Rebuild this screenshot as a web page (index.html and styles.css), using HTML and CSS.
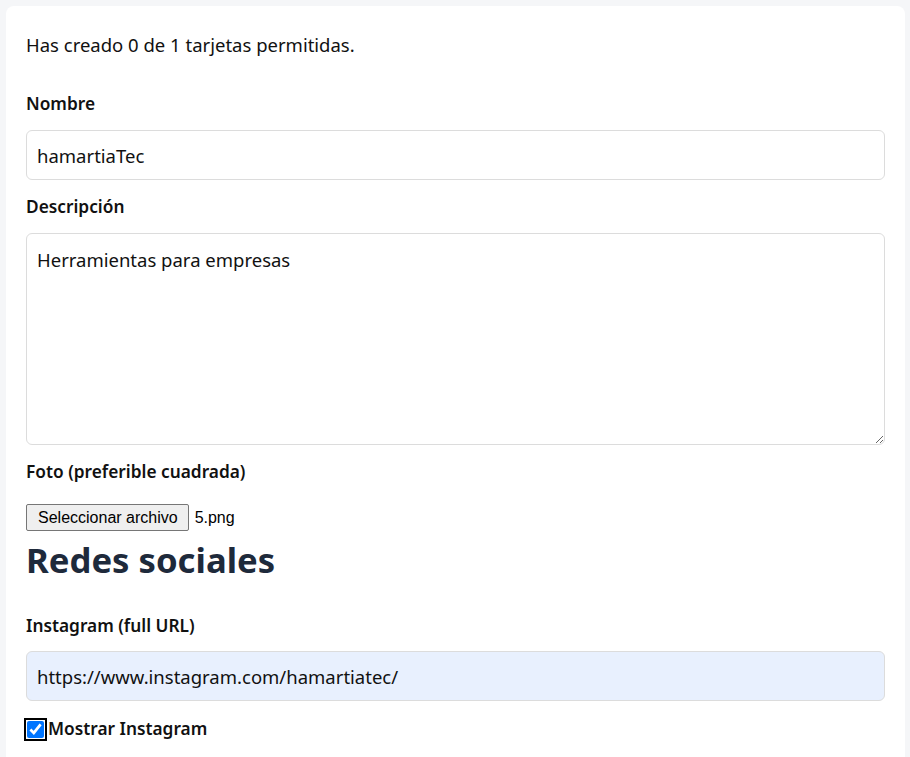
FILE: index.html
```html
<!DOCTYPE html>
<html lang="es">
<head>
<meta charset="utf-8">
<title>Crear tarjeta</title>
<link rel="stylesheet" href="styles.css">
</head>
<body>
<div class="card">
  <p class="intro">Has creado 0 de 1 tarjetas permitidas.</p>
  <div class="group">
    <label class="lbl" for="nombre">Nombre</label>
    <input class="field" id="nombre" type="text" value="hamartiaTec">
  </div>
  <div class="group">
    <label class="lbl" for="desc">Descripción</label>
    <textarea class="field area" id="desc">Herramientas para empresas</textarea>
  </div>
  <div class="group">
    <label class="lbl">Foto (preferible cuadrada)</label>
    <div class="file">
      <button class="file-btn" type="button">Seleccionar archivo</button>
      <span class="file-name">5.png</span>
    </div>
  </div>
  <h2 class="section">Redes sociales</h2>
  <div class="group">
    <label class="lbl lbl-tight" for="ig">Instagram (full URL)</label>
    <input class="field autofill" id="ig" type="text" value="https://www.instagram.com/hamartiatec/">
  </div>
  <label class="check">
    <input type="checkbox" class="cb" checked>
    <span>Mostrar Instagram</span>
  </label>
</div>
</body>
</html>
```
FILE: styles.css
```css
html, body {
  margin: 0;
  padding: 0;
}
body {
  background: #f5f6f8;
  font-family: "Noto Sans", "Open Sans", sans-serif;
  font-size: 18.5px;
  color: #111;
  padding: 6px 5px 0 6px;
  height: 757px;
  box-sizing: border-box;
  overflow: hidden;
}
.card {
  background: #fff;
  border-radius: 8px;
  padding: 27px 20px 20px 20px;
  min-height: 800px;
}
.intro {
  margin: 0 0 35px 0;
  line-height: 24px;
}
.group {
  margin-bottom: 15px;
}
.lbl {
  display: block;
  font-size: 17.3px;
  font-weight: 600;
  line-height: 24px;
  margin-bottom: 14px;
}
.lbl-tight {
  margin-bottom: 13px;
}
.field {
  display: block;
  width: 100%;
  box-sizing: border-box;
  height: 50px;
  padding: 12px 10px;
  border: 1px solid #dcdcdc;
  border-radius: 6px;
  font-family: inherit;
  font-size: 18.5px;
  line-height: 24px;
  color: #111;
  background: #fff;
  outline: none;
}
.area {
  height: 212px;
  padding-top: 14px;
  resize: vertical;
}
.autofill {
  background: #e8f0fe;
}
.file {
  display: flex;
  align-items: center;
  gap: 6px;
  margin-top: 20px;
}
.file-btn {
  font-family: "Liberation Sans", Arial, sans-serif;
  font-size: 16px;
  height: 27px;
  padding: 1px 10px 1px 11px;
  border: 1px solid #767676;
  border-radius: 2px;
  background: #efefef;
  color: #000;
}
.file-name {
  font-family: "Liberation Sans", Arial, sans-serif;
  font-size: 16px;
  color: #000;
}
.section {
  margin: -8px 0 32px 0;
  font-size: 34.7px;
  font-weight: 700;
  line-height: 44px;
  color: #1e2a3b;
}
.check {
  display: flex;
  align-items: center;
  gap: 4px;
  font-size: 17.3px;
  font-weight: 600;
  line-height: 24px;
  margin-top: 16px;
  margin-left: 0;
}
.cb {
  width: 17px;
  height: 17px;
  margin: 0 0 0 1px;
  accent-color: #0075ff;
  outline: 2px solid #000;
  outline-offset: 1px;
  border-radius: 3px;
}
```
